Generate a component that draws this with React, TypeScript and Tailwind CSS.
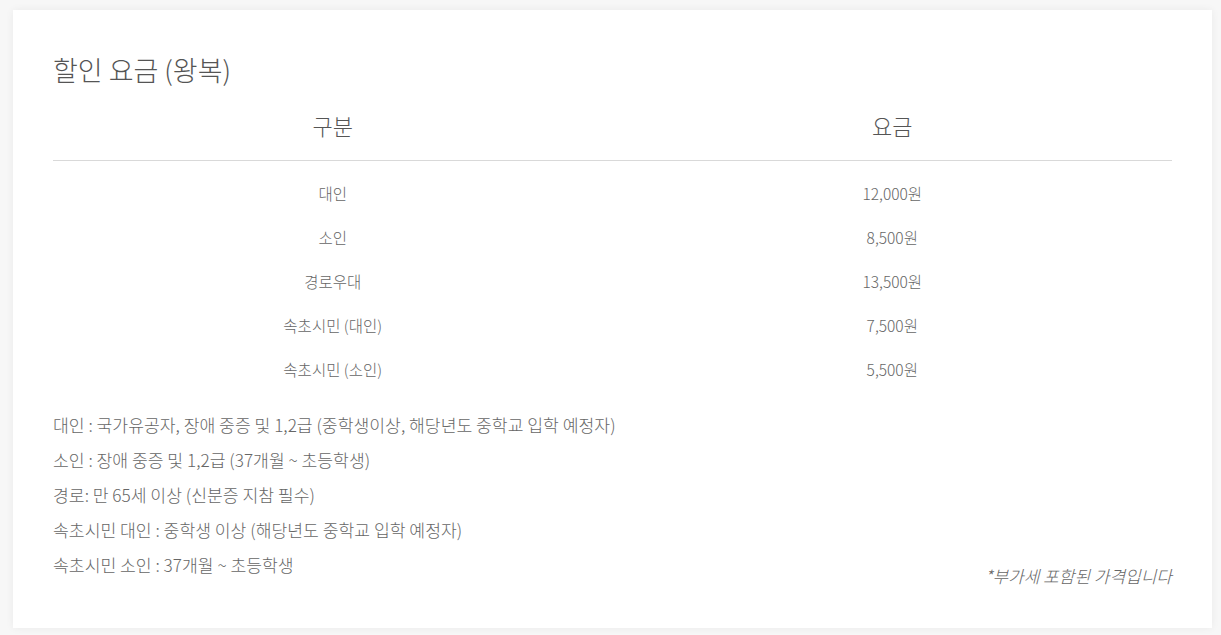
const rows = [
  { label: '대인', price: '12,000원' },
  { label: '소인', price: '8,500원' },
  { label: '경로우대', price: '13,500원' },
  { label: '속초시민 (대인)', price: '7,500원' },
  { label: '속초시민 (소인)', price: '5,500원' },
];

const notes = [
  '대인 : 국가유공자, 장애 중증 및 1,2급 (중학생이상, 해당년도 중학교 입학 예정자)',
  '소인 : 장애 중증 및 1,2급 (37개월 ~ 초등학생)',
  '경로: 만 65세 이상 (신분증 지참 필수)',
  '속초시민 대인 : 중학생 이상 (해당년도 중학교 입학 예정자)',
  '속초시민 소인 : 37개월 ~ 초등학생',
];

const App = () => {
  return (
    <div
      className="min-h-[635px] bg-[#f7f7f7] pt-[10px] pl-[13px] font-light"
      style={{ fontFamily: '"Noto Sans CJK KR", "Noto Sans", sans-serif' }}
    >
      <section className="w-[1199px] h-[618px] bg-white shadow-[0_0_8px_rgba(0,0,0,0.06)] px-[40px] pt-[42px]">
        <h2 className="text-[27px] leading-[36px] text-[#555]">할인 요금 (왕복)</h2>

        <div className="grid grid-cols-2 border-b border-[#d9d9d9] pt-[22px] pb-[20px]">
          <div className="text-center text-[22px] leading-[30px] text-[#555]">구분</div>
          <div className="text-center text-[22px] leading-[30px] text-[#555]">요금</div>
        </div>

        <div className="pt-[11px]">
          {rows.map((row) => (
            <div key={row.label} className="grid grid-cols-2 h-[44px] items-center text-[15.5px] text-[#666]">
              <div className="text-center">{row.label}</div>
              <div className="text-center">{row.price}</div>
            </div>
          ))}
        </div>

        <div className="flex justify-between items-end mt-[15px]">
          <ul>
            {notes.map((note) => (
              <li key={note} className="h-[35px] flex items-center text-[17.2px] text-[#666]">
                {note}
              </li>
            ))}
          </ul>
          <p className="italic text-[17px] leading-[24px] text-[#666] mb-[-6px]">*부가세 포함된 가격입니다</p>
        </div>
      </section>
    </div>
  );
};

export default App;
